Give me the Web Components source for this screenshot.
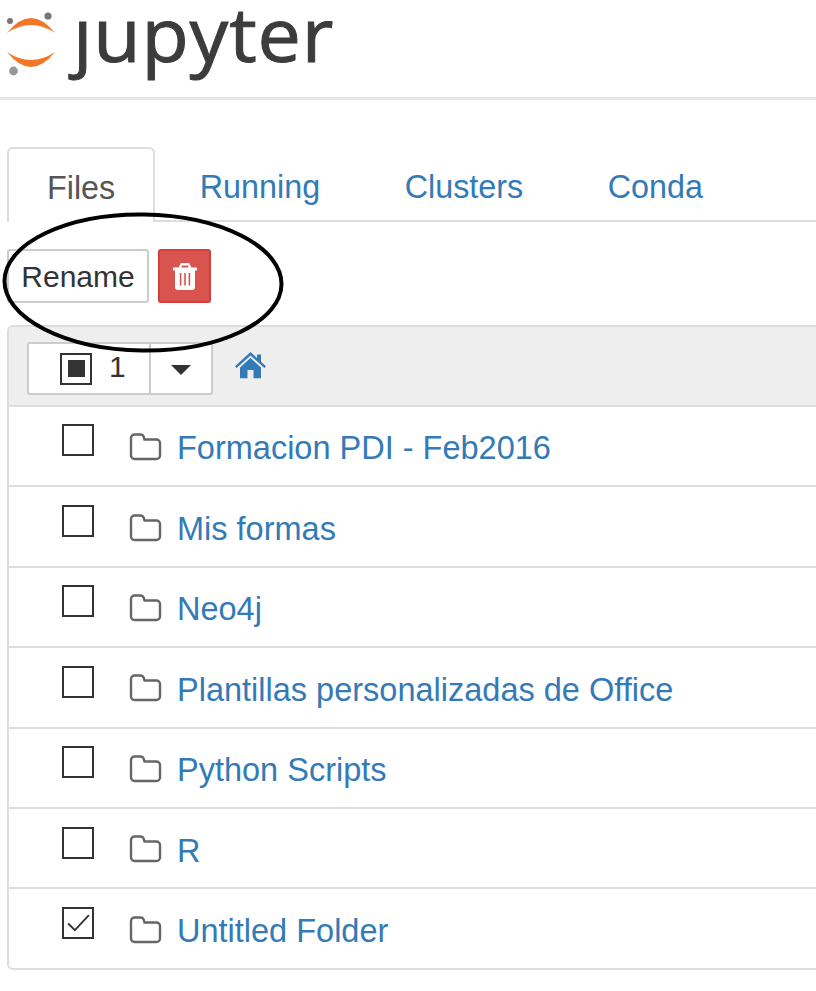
<!DOCTYPE html>
<html>
<head>
<meta charset="utf-8">
<title>Jupyter</title>
<style>
    html, body { margin: 0; background: #fff; overflow: hidden; }
    body { font-family: "Liberation Sans", Arial, sans-serif; position: relative; height: 991px; }
</style>
</head>
<body>
<jp-header></jp-header>
<jp-tabs>
    <jp-tab active>Files</jp-tab>
    <jp-tab>Running</jp-tab>
    <jp-tab>Clusters</jp-tab>
    <jp-tab>Conda</jp-tab>
</jp-tabs>
<jp-toolbar></jp-toolbar>
<jp-list>
    <jp-row>Formacion PDI - Feb2016</jp-row>
    <jp-row>Mis formas</jp-row>
    <jp-row>Neo4j</jp-row>
    <jp-row>Plantillas personalizadas de Office</jp-row>
    <jp-row>Python Scripts</jp-row>
    <jp-row>R</jp-row>
    <jp-row checked>Untitled Folder</jp-row>
</jp-list>
<jp-circle></jp-circle>

<script>
class JpHeader extends HTMLElement {
    constructor() {
        super();
        this.attachShadow({ mode: "open" });
    }
    connectedCallback() {
        this.shadowRoot.innerHTML = `
            <style>
                :host { display: flex; align-items: flex-start; height: 97px; border-bottom: 3px solid #e7e7e7; }
                svg { width: 60px; height: 80px; flex: none; }
                .word {
                    font-family: "Open Sans", sans-serif;
                    font-size: 75px;
                    line-height: 66px;
                    color: #3c3c3d;
                    margin: 0 0 0 13px;
                    letter-spacing: 0.800px;
                    -webkit-text-stroke: 1px #3c3c3d;
                    transform: scaleX(1.03);
                    transform-origin: left top;
                }
            </style>
            <svg viewBox="0 0 60 80">
                <path d="M7 33 Q31 3 55 33 Q31 17 7 33Z" fill="#f37726"/>
                <path d="M7 52 Q31 82 55 52 Q31 68 7 52Z" fill="#f37726"/>
                <circle cx="10" cy="21" r="3" fill="#767677"/>
                <circle cx="48" cy="16" r="3.600" fill="#767677"/>
                <circle cx="13.500" cy="71" r="4.400" fill="#989798"/>
            </svg>
            <div class="word" aria-label="jupyter">&#x237;upyter</div>
        `;
    }
}

class JpTabs extends HTMLElement {
    constructor() {
        super();
        this.attachShadow({ mode: "open" });
    }
    connectedCallback() {
        this.shadowRoot.innerHTML = `
            <style>
                :host { display: flex; gap: 4.600px; margin: 47px 0 0 7px; height: 73px; border-bottom: 2px solid #ddd; }
            </style>
            <slot></slot>
        `;
    }
}

class JpTab extends HTMLElement {
    constructor() {
        super();
        this.attachShadow({ mode: "open" });
    }
    connectedCallback() {
        this.shadowRoot.innerHTML = `
            <style>
                :host {
                    display: flex;
                    align-items: center;
                    height: 73px;
                    padding: 8px 40px 0;
                    box-sizing: border-box;
                    font-size: 32.300px;
                    color: #337ab7;
                }
                :host([active]) {
                    color: #555;
                    background: #fff;
                    height: 75px;
                    padding: 6px 38px 0;
                    border: 2px solid #ddd;
                    border-bottom: 0;
                    border-radius: 6px 6px 0 0;
                }
            </style>
            <slot></slot>
        `;
    }
}

class JpToolbar extends HTMLElement {
    constructor() {
        super();
        this.attachShadow({ mode: "open" });
    }
    connectedCallback() {
        this.shadowRoot.innerHTML = `
            <style>
                :host { display: flex; gap: 9px; margin: 27px 0 0 7px; height: 54px; }
                .btn { box-sizing: border-box; height: 54px; border-radius: 3px; display: flex; align-items: center; justify-content: center; }
                .rename { width: 142px; padding-top: 2px; border: 2px solid #ccc; background: #fff; color: #333; font-size: 30px; }
                .delete { width: 53px; border: 2px solid #d43f3a; background: #d9534f; }
                svg { width: 26px; height: 28px; }
            </style>
            <div class="btn rename">Rename</div>
            <div class="btn delete">
                <svg viewBox="0 0 26 28">
                    <path fill="#fff" fill-rule="evenodd" d="M9 1h8l2.500 4.500H25v3h-2v16.500a3 3 0 0 1-3 3H6a3 3 0 0 1-3-3V8.500H1v-3h5.500ZM10.200 3.500l-.9 2h7.400l-.9-2Z"/>
                    <path fill="#d9534f" d="M7.800 11h1.600v12.500H7.800ZM12.200 11h1.600v12.500h-1.600ZM16.600 11h1.600v12.500h-1.600Z"/>
                </svg>
            </div>
        `;
    }
}

class JpList extends HTMLElement {
    constructor() {
        super();
        this.attachShadow({ mode: "open" });
    }
    connectedCallback() {
        this.shadowRoot.innerHTML = `
            <style>
                :host {
                    display: block;
                    margin: 22px -20px 0 7px;
                    border: 2px solid #ddd;
                    border-radius: 6px;
                    box-sizing: border-box;
                }
                .head {
                    display: flex;
                    align-items: flex-start;
                    height: 63px;
                    background: #eee;
                    border-bottom: 2px solid #ddd;
                    padding: 15px 0 0 18px;
                    border-radius: 4px 4px 0 0;
                }
                .group {
                    display: flex;
                    height: 53px;
                    box-sizing: border-box;
                    background: #fff;
                    border: 2px solid #ccc;
                    border-radius: 3px;
                }
                .select { display: flex; align-items: center; width: 122px; box-sizing: border-box; padding: 0 0 4px 31px; border-right: 2px solid #ccc; font-size: 30px; color: #333; }
                .box { box-sizing: border-box; width: 32px; height: 32px; border: 2.500px solid #333; display: flex; align-items: center; justify-content: center; margin-right: 17px; margin-top: 4px; }
                .box i { width: 17px; height: 17px; background: #333; }
                .caret { display: flex; align-items: center; justify-content: center; width: 60px; padding-top: 2px; }
                .caret i { border: solid transparent; border-width: 10px 10px 0; border-top-color: #333; }
                .home { width: 31px; height: 27px; margin: 10px 0 0 22px; }
            </style>
            <div class="head">
                <div class="group">
                    <div class="select"><span class="box"><i></i></span>1</div>
                    <div class="caret"><i></i></div>
                </div>
                <svg class="home" viewBox="0 0 31 27">
                    <path fill="#337ab7" d="M15.500 0 L22 6V2.500h4V9.700l5 4.600-1.600 1.800L15.500 3.400 1.600 16.100 0 14.300Z"/>
                    <path fill="#337ab7" d="M15.500 6 L26 15.600V26.200H18.500V18h-6v8.200H5V15.600Z"/>
                </svg>
            </div>
            <slot></slot>
        `;
    }
}

class JpRow extends HTMLElement {
    constructor() {
        super();
        this.attachShadow({ mode: "open" });
    }
    connectedCallback() {
        const check = this.hasAttribute("checked")
            ? `<svg viewBox="0 0 27 27"><path d="M4 14 L10.500 20.500 L24 6" fill="none" stroke="#333" stroke-width="1.800"/></svg>`
            : "";
        this.shadowRoot.innerHTML = `
            <style>
                :host {
                    display: flex;
                    align-items: center;
                    height: 80.400px;
                    box-sizing: border-box;
                    padding: 6px 0 0 53px;
                    border-top: 2px solid #ddd;
                    font-size: 32.500px;
                    color: #337ab7;
                }
                :host(:first-of-type) { border-top: 0; height: 78.400px; padding-top: 5px; }
                .box { box-sizing: border-box; width: 32px; height: 32px; border: 2.500px solid #333; margin: -17px 35px 0 0; }
                .box svg { display: block; width: 100%; height: 100%; }
                .folder { width: 33px; height: 28px; margin: -4px 15px 0 0; }
            </style>
            <span class="box">${check}</span>
            <svg class="folder" viewBox="0 0 33 28">
                <path d="M2 5 a3.500 3.500 0 0 1 3.500-3.500 h6 a3.500 3.500 0 0 1 3.200 2.200 l.8 2.800 h12 a3.500 3.500 0 0 1 3.500 3.500 v12.500 a3.500 3.500 0 0 1-3.500 3.500 h-22 a3.500 3.500 0 0 1-3.500-3.500Z" fill="none" stroke="#666" stroke-width="2.400"/>
            </svg>
            <slot></slot>
        `;
    }
}

// hand drawn ring that lies over the toolbar
class JpCircle extends HTMLElement {
    constructor() {
        super();
        this.attachShadow({ mode: "open" });
    }
    connectedCallback() {
        this.shadowRoot.innerHTML = `
            <style>
                :host { position: absolute; left: 0; top: 205px; width: 290px; height: 155px; pointer-events: none; }
                svg { width: 100%; height: 100%; display: block; }
            </style>
            <svg viewBox="0 0 290 155">
                <ellipse cx="143" cy="77.500" rx="138.500" ry="68" fill="none" stroke="#000" stroke-width="4" transform="rotate(0.800 143 77.500)"/>
            </svg>
        `;
    }
}

customElements.define("jp-header", JpHeader);
customElements.define("jp-tabs", JpTabs);
customElements.define("jp-tab", JpTab);
customElements.define("jp-toolbar", JpToolbar);
customElements.define("jp-list", JpList);
customElements.define("jp-row", JpRow);
customElements.define("jp-circle", JpCircle);
</script>
</body>
</html>
